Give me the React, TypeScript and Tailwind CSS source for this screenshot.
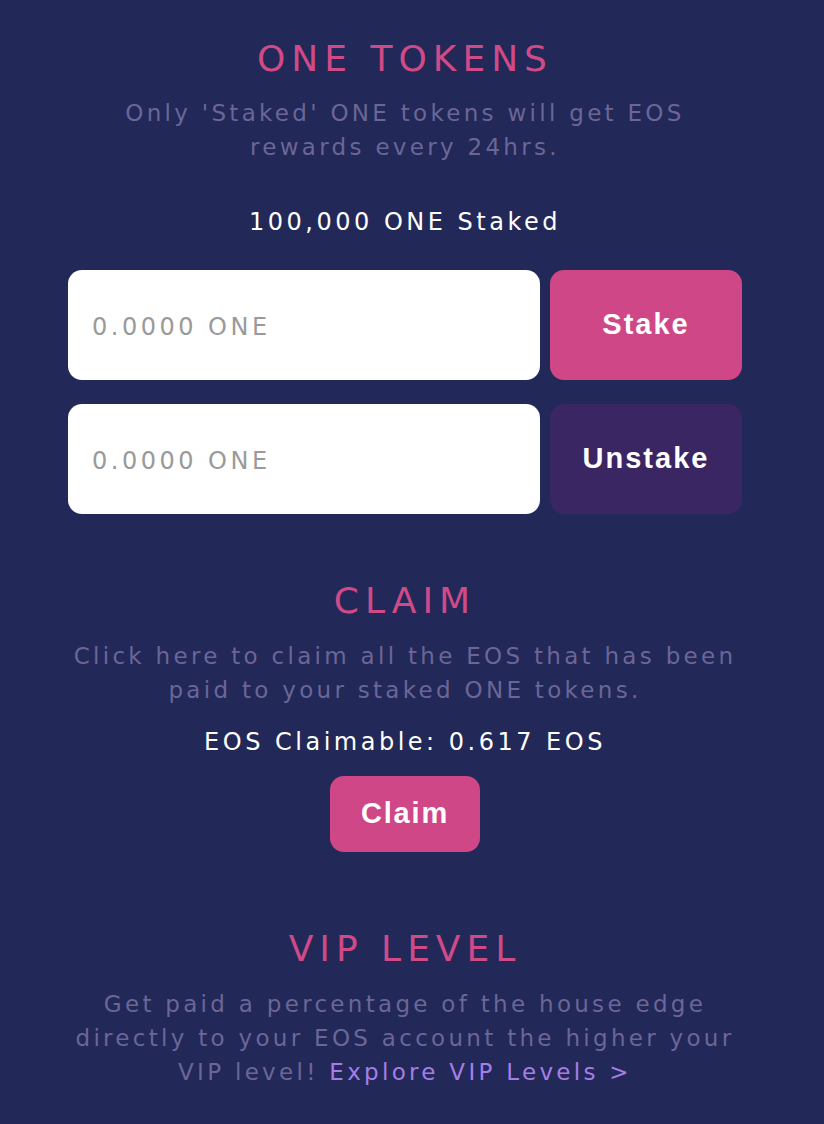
import React from 'react';

const mont = "font-['DejaVu_Sans','Open_Sans',sans-serif]";

const Title: React.FC<{ children: React.ReactNode; className?: string }> = ({ children, className }) => (
    <h2 className={`${mont} text-[36px] leading-[48px] font-normal tracking-[6px] text-[#d04a88] ${className ?? ''}`}>
        {children}
    </h2>
);

const Muted: React.FC<{ children: React.ReactNode; className?: string }> = ({ children, className }) => (
    <p className={`${mont} text-[23px] leading-[34px] tracking-[3.3px] text-[#6b6697] text-center ${className ?? ''}`}>
        {children}
    </p>
);

const AmountRow: React.FC<{ label: string; variant: 'stake' | 'unstake'; className?: string }> = ({ label, variant, className }) => (
    <div className={`flex gap-[10px] ${className ?? ''}`}>
        <div className="w-[472px] h-[110px] rounded-[14px] bg-white flex items-center px-6 pt-[3px]">
            <input
                placeholder="0.0000 ONE"
                className={`${mont} w-full bg-transparent outline-none text-[24px] tracking-[3.5px] text-[#333] placeholder:text-[#9a9a9a]`}
            />
        </div>
        <button
            className={`w-[192px] h-[110px] rounded-[14px] font-['Liberation_Sans',Arial,sans-serif] font-bold text-[29px] tracking-[2px] text-white ${
                variant === 'stake' ? 'bg-[#cf4787]' : 'bg-[#392663]'
            }`}
        >
            {label}
        </button>
    </div>
);

export default function App() {
    return (
        <div className="min-h-[1124px] bg-[#222857] pr-[14px] flex flex-col items-center">
            <Title className="mt-[35px]">ONE TOKENS</Title>
            <Muted className="mt-[13px]">
                Only 'Staked' ONE tokens will get EOS
                <br />
                rewards every 24hrs.
            </Muted>
            <p className={`${mont} mt-[41px] text-[24px] leading-[34px] tracking-[3.5px] text-white`}>100,000 ONE Staked</p>

            <AmountRow label="Stake" variant="stake" className="mt-[31px]" />
            <AmountRow label="Unstake" variant="unstake" className="mt-[24px]" />

            <Title className="mt-[63px]">CLAIM</Title>
            <Muted className="mt-[14px]">
                Click here to claim all the EOS that has been
                <br />
                paid to your staked ONE tokens.
            </Muted>
            <p className={`${mont} mt-[18px] text-[24px] leading-[34px] tracking-[3.5px] text-white`}>EOS Claimable: 0.617 EOS</p>
            <button className="mt-[17px] w-[150px] h-[76px] rounded-[14px] bg-[#cf4787] font-['Liberation_Sans',Arial,sans-serif] font-bold text-[29px] tracking-[1.8px] text-white">
                Claim
            </button>

            <Title className="mt-[73px]">VIP LEVEL</Title>
            <Muted className="mt-[14px]">
                Get paid a percentage of the house edge
                <br />
                directly to your EOS account the higher your
                <br />
                VIP level!{' '}
                <a href="#" className="text-[#a67de6]">
                    Explore VIP Levels &gt;
                </a>
            </Muted>
        </div>
    );
}
